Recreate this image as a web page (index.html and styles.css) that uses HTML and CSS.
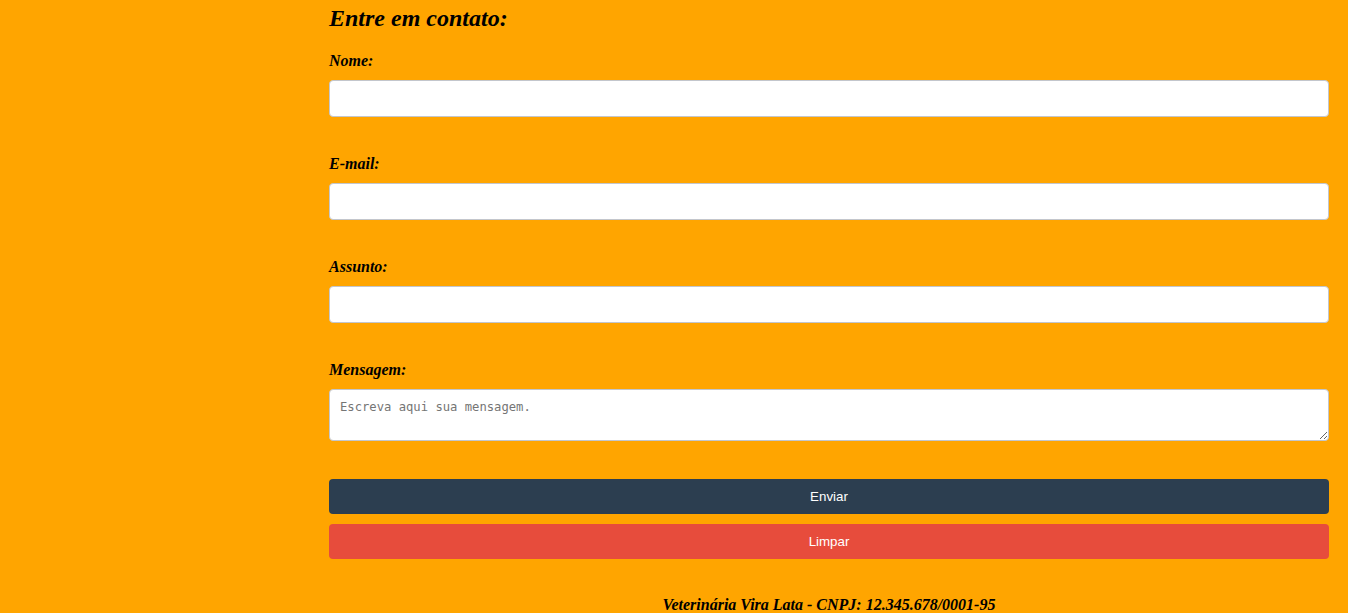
FILE: index.html
```html
<!DOCTYPE html>
<html lang="pt-BR">
<head>
<meta charset="utf-8">
<title>Contato - Veterinária Vira Lata</title>
<link rel="stylesheet" href="styles.css">
</head>
<body>
<main class="contact">
  <h2 class="contact-title">Entre em contato:</h2>
  <form class="contact-form">
    <label class="field-label" for="nome">Nome:</label>
    <input class="field-input" type="text" id="nome" name="nome">

    <label class="field-label" for="email">E-mail:</label>
    <input class="field-input" type="email" id="email" name="email">

    <label class="field-label" for="assunto">Assunto:</label>
    <input class="field-input" type="text" id="assunto" name="assunto">

    <label class="field-label" for="mensagem">Mensagem:</label>
    <textarea class="field-textarea" id="mensagem" name="mensagem" placeholder="Escreva aqui sua mensagem."></textarea>

    <div class="actions">
      <button class="btn btn-send" type="submit">Enviar</button>
      <button class="btn btn-clear" type="reset">Limpar</button>
    </div>
  </form>
  <footer class="contact-footer">Veterinária Vira Lata - CNPJ: 12.345.678/0001-95</footer>
</main>
</body>
</html>
```
FILE: styles.css
```css
html, body {
  margin: 0;
  padding: 0;
}

body {
  background: #ffa500;
  font-family: "Liberation Serif", "Times New Roman", serif;
  color: #000;
}

.contact {
  width: 1000px;
  margin-left: 329px;
  padding-top: 4px;
}

.contact-title {
  margin: 0 0 20px;
  font-size: 24px;
  line-height: 28px;
  font-weight: bold;
  font-style: italic;
}

.contact-form {
  display: flex;
  flex-direction: column;
}

.field-label {
  display: block;
  font-size: 16px;
  line-height: 18px;
  font-weight: bold;
  font-style: italic;
  margin-bottom: 10px;
}

.field-input,
.field-textarea {
  display: block;
  width: 100%;
  box-sizing: border-box;
  margin: 0 0 38px;
  padding: 10px;
  border: 1px solid #c3c6cc;
  border-radius: 4px;
  background: #fff;
  outline: none;
}

.field-input {
  height: 37px;
  font-family: "Liberation Sans", Arial, sans-serif;
  font-size: 13.333px;
}

.field-textarea {
  height: 52px;
  font-family: "DejaVu Sans Mono", "Liberation Mono", monospace;
  font-size: 12.2px;
  line-height: 15px;
  resize: both;
}

.field-textarea::placeholder {
  color: #757575;
}

.actions {
  display: flex;
  flex-direction: column;
  gap: 10px;
}

.btn {
  display: block;
  width: 100%;
  height: 35px;
  border: 0;
  border-radius: 4px;
  color: #fff;
  font-family: "Liberation Sans", Arial, sans-serif;
  font-size: 13.333px;
  cursor: pointer;
}

.btn-send {
  background: #2c3e50;
}

.btn-clear {
  background: #e74c3c;
}

.contact-footer {
  margin-top: 37px;
  text-align: center;
  font-size: 16px;
  line-height: 18px;
  font-weight: bold;
  font-style: italic;
}
```
